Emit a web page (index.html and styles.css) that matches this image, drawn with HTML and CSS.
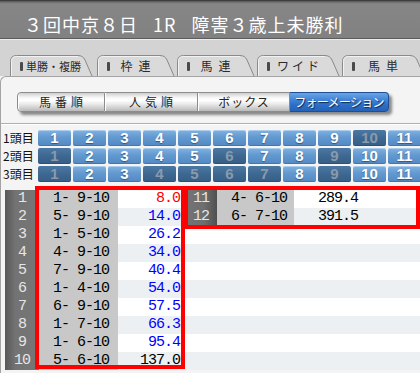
FILE: index.html
```html
<!DOCTYPE html>
<html lang="ja">
<head>
<meta charset="utf-8">
<title>オッズ</title>
<link rel="stylesheet" href="styles.css">
</head>
<body>
<header class="header"><h1 class="title">３回中京８日 1R 障害３歳上未勝利</h1></header>

<nav class="tabs">
  <div class="tab">
    <svg class="tab-shape" width="85" height="21" viewBox="0 0 85 21"><path class="tab-fill" d="M0.5 21 V6.5 Q0.5 0.5 6.5 0.5 H68 Q73 0.5 75 5 L82 21"/><path class="tab-hl" d="M1.5 21 V6.5 Q1.5 1.5 6.5 1.5 H68"/></svg>
    <span class="tab-label"><i class="tab-mark"></i><span class="tab-text tab-text-tight">単勝・複勝</span></span>
  </div>
  <div class="tab">
    <svg class="tab-shape" width="80" height="21" viewBox="0 0 80 21"><path class="tab-fill" d="M0.5 21 V6.5 Q0.5 0.5 6.5 0.5 H63 Q68 0.5 70 5 L77 21"/><path class="tab-hl" d="M1.5 21 V6.5 Q1.5 1.5 6.5 1.5 H63"/></svg>
    <span class="tab-label"><i class="tab-mark"></i><span class="tab-text tab-text-wide">枠連</span></span>
  </div>
  <div class="tab">
    <svg class="tab-shape" width="80" height="21" viewBox="0 0 80 21"><path class="tab-fill" d="M0.5 21 V6.5 Q0.5 0.5 6.5 0.5 H63 Q68 0.5 70 5 L77 21"/><path class="tab-hl" d="M1.5 21 V6.5 Q1.5 1.5 6.5 1.5 H63"/></svg>
    <span class="tab-label"><i class="tab-mark"></i><span class="tab-text tab-text-wide">馬連</span></span>
  </div>
  <div class="tab">
    <svg class="tab-shape" width="85" height="21" viewBox="0 0 85 21"><path class="tab-fill" d="M0.5 21 V6.5 Q0.5 0.5 6.5 0.5 H68 Q73 0.5 75 5 L82 21"/><path class="tab-hl" d="M1.5 21 V6.5 Q1.5 1.5 6.5 1.5 H68"/></svg>
    <span class="tab-label"><i class="tab-mark"></i><span class="tab-text tab-text-mid">ワイド</span></span>
  </div>
  <div class="tab">
    <svg class="tab-shape" width="85" height="21" viewBox="0 0 85 21"><path class="tab-fill" d="M0.5 21 V6.5 Q0.5 0.5 6.5 0.5 H68 Q73 0.5 75 5 L82 21"/><path class="tab-hl" d="M1.5 21 V6.5 Q1.5 1.5 6.5 1.5 H68"/></svg>
    <span class="tab-label"><i class="tab-mark"></i><span class="tab-text tab-text-wide">馬単</span></span>
  </div>
</nav>

<main class="panel">
  <div class="sorts">
    <button class="sort sort-a">馬番順</button>
    <button class="sort sort-b">人気順</button>
    <button class="sort sort-c">ボックス</button>
    <button class="sort sort-d sort-on">フォーメーション</button>
  </div>

  <hr class="divider">

  <div class="picker">
    <span class="pick-label">1頭目</span>
    <span class="cell on">1</span><span class="cell on">2</span><span class="cell on">3</span><span class="cell on">4</span><span class="cell on">5</span><span class="cell on">6</span><span class="cell on">7</span><span class="cell on">8</span><span class="cell on">9</span><span class="cell off">10</span><span class="cell on">11</span>
    <span class="pick-label">2頭目</span>
    <span class="cell off">1</span><span class="cell on">2</span><span class="cell on">3</span><span class="cell on">4</span><span class="cell on">5</span><span class="cell off">6</span><span class="cell on">7</span><span class="cell on">8</span><span class="cell off">9</span><span class="cell on">10</span><span class="cell on">11</span>
    <span class="pick-label">3頭目</span>
    <span class="cell off">1</span><span class="cell on">2</span><span class="cell on">3</span><span class="cell off">4</span><span class="cell off">5</span><span class="cell off">6</span><span class="cell off">7</span><span class="cell on">8</span><span class="cell off">9</span><span class="cell on">10</span><span class="cell on">11</span>
  </div>

  <section class="results">
    <div class="list list-left">
      <div class="row"><span class="num">1</span><span class="combo">1- 9-10</span><span class="odds odds-red">8.0</span></div>
      <div class="row"><span class="num">2</span><span class="combo">5- 9-10</span><span class="odds odds-blue">14.0</span></div>
      <div class="row"><span class="num">3</span><span class="combo">1- 5-10</span><span class="odds odds-blue">26.2</span></div>
      <div class="row"><span class="num">4</span><span class="combo">4- 9-10</span><span class="odds odds-blue">34.0</span></div>
      <div class="row"><span class="num">5</span><span class="combo">7- 9-10</span><span class="odds odds-blue">40.4</span></div>
      <div class="row"><span class="num">6</span><span class="combo">1- 4-10</span><span class="odds odds-blue">54.0</span></div>
      <div class="row"><span class="num">7</span><span class="combo">6- 9-10</span><span class="odds odds-blue">57.5</span></div>
      <div class="row"><span class="num">8</span><span class="combo">1- 7-10</span><span class="odds odds-blue">66.3</span></div>
      <div class="row"><span class="num">9</span><span class="combo">1- 6-10</span><span class="odds odds-blue">95.4</span></div>
      <div class="row"><span class="num">10</span><span class="combo">5- 6-10</span><span class="odds">137.0</span></div>
    </div>
    <div class="list list-right">
      <div class="row"><span class="num">11</span><span class="combo">4- 6-10</span><span class="odds">289.4</span></div>
      <div class="row"><span class="num">12</span><span class="combo">6- 7-10</span><span class="odds">391.5</span></div>
    </div>
    <div class="frame frame-left"></div>
    <div class="frame frame-right"></div>
  </section>
</main>
</body>
</html>
```

FILE: styles.css
```css
* { box-sizing: border-box; }

html, body {
  margin: 0;
  padding: 0;
}

body {
  width: 420px;
  height: 373px;
  overflow: hidden;
  background: #f4f4f4;
  font-family: "Noto Sans CJK JP", "Liberation Sans", sans-serif;
  color: #222;
}

/* ---------- header ---------- */
.header {
  height: 39px;
  background: linear-gradient(#2e2e2e 0, #6e6e6e 2px, #868686 4px, #818181 100%);
  border-bottom: 1px solid #5c5c5c;
}

.title {
  margin: 0;
  padding: 12px 0 0 24px;
  font-weight: normal;
  font-size: 18px;
  line-height: 24px;
  letter-spacing: 1px;
  word-spacing: 10px;
  color: #fff;
  white-space: nowrap;
}

/* ---------- tabs ---------- */
.tabs {
  display: flex;
  height: 37px;
  padding: 15px 0 0 10px;
  background: #d3d3d3;
  border-top: 1px solid #ebebeb;
  overflow: hidden;
}

.tab {
  display: grid;
  height: 21px;
  flex: none;
}

.tab > * { grid-area: 1 / 1; }

.tab-shape { display: block; }

.tab-fill {
  fill: #dadada;
  stroke: #8a8a8a;
  stroke-width: 1;
}

.tab-hl {
  fill: none;
  stroke: #f2f2f2;
  stroke-width: 1;
}

.tab-label {
  display: flex;
  align-items: center;
  padding: 1px 16px 0 10px;
}

.tab-mark {
  display: block;
  width: 3px;
  height: 9px;
  border-radius: 1px;
  background: #4a4a4a;
  flex: none;
}

.tab-text {
  flex: 1;
  text-align: center;
  font-size: 12px;
  line-height: 14px;
  color: #2a2a2a;
  white-space: nowrap;
}

.tab-text-tight {
  font-size: 11px;
  letter-spacing: 0;
  padding-left: 3px;
  text-align: left;
}

.tab-text-wide { letter-spacing: 6px; padding-left: 6px; }
.tab-text-mid { letter-spacing: 3px; padding-left: 3px; }

/* ---------- panel ---------- */
.panel {
  background: #f4f4f4;
  border-top: 1px solid #a3a3a3;
  border-left: 1px solid #a3a3a3;
  border-top-left-radius: 6px;
  height: 297px;
}

.sorts {
  display: flex;
  width: fit-content;
  margin: 15px 0 0 16px;
  border-radius: 4px;
  box-shadow: 3px 3px 3px rgba(0, 0, 0, 0.45);
}

.sort {
  height: 20px;
  padding: 0;
  margin: 0;
  border: 1px solid #8c8c8c;
  border-left: none;
  background: linear-gradient(#cfcfcf 0%, #f6f6f6 25%, #ffffff 40%, #e6e6e6 65%, #b9b9b9 100%);
  font-family: "Noto Sans CJK JP", sans-serif;
  font-size: 12px;
  line-height: 18px;
  color: #222;
  box-shadow: inset 1px 0 0 #fff;
}

.sort-a {
  width: 88px;
  border-left: 1px solid #8c8c8c;
  border-radius: 4px 0 0 4px;
  letter-spacing: 4px;
  padding-left: 4px;
}

.sort-b { width: 93px; letter-spacing: 4px; padding-left: 4px; }
.sort-c { width: 92px; letter-spacing: 1px; padding-left: 1px; }

.sort-d {
  width: 99px;
  letter-spacing: -0.7px;
  border-radius: 0 4px 4px 0;
}

.sort-on {
  background: linear-gradient(#6aa4e6 0%, #3f82d6 40%, #2c6cc4 70%, #2563b8 100%);
  border-color: #1f4f92;
  color: #fff;
  text-shadow: 1px 1px 1px #0c2448;
  box-shadow: none;
}

.divider {
  margin: 11px 0 0 0;
  height: 2px;
  border: none;
  border-top: 1px solid #b0b0b0;
  border-bottom: 1px solid #ffffff;
}

/* ---------- horse picker ---------- */
.picker {
  display: grid;
  grid-template-columns: 35px repeat(11, 33px);
  grid-auto-rows: 16px;
  column-gap: 2px;
  row-gap: 2px;
  margin-top: 5px;
}

.pick-label {
  padding-left: 2px;
  font-size: 12px;
  line-height: 16px;
  letter-spacing: 0;
  color: #111;
  white-space: nowrap;
}

.cell {
  border-radius: 2px;
  text-align: center;
  font-family: "Liberation Sans", Arial, sans-serif;
  font-weight: bold;
  font-size: 15px;
  line-height: 16px;
}

.cell.on {
  background: linear-gradient(#80b3e3 0%, #6399d0 45%, #5289c3 100%);
  color: #fff;
  text-shadow: 0 1px 1px rgba(20, 50, 90, 0.6);
  box-shadow: inset 0 1px 0 rgba(255, 255, 255, 0.35), inset 0 -1px 0 rgba(0, 0, 0, 0.15);
}

.cell.off {
  background: linear-gradient(#4b78a4 0%, #3e6891 50%, #365e86 100%);
  color: #8a9aab;
  box-shadow: inset 0 -1px 0 rgba(0, 0, 0, 0.15);
}

/* ---------- results ---------- */
.results {
  position: relative;
  display: flex;
  margin-top: 4px;
  padding-top: 4px;
  font-family: "Liberation Mono", "DejaVu Sans Mono", monospace;
  font-size: 15px;
  letter-spacing: -1px;
}

.list-left {
  margin-left: 4px;
  width: 180px;
  flex: none;
}

.list-right {
  flex: 1;
  padding-left: 3px;
  height: 180px;
  background: repeating-linear-gradient(#ffffff 0 18px, #ecf0f3 18px 36px);
}

.row {
  display: flex;
  height: 18px;
  line-height: 18px;
  white-space: pre;
}

.num {
  color: #e6e6e6;
  text-align: center;
}

.list-left .num {
  width: 34px;
  background: linear-gradient(to right, #575757 0, #737373 30%, #767676 100%);
}

.list-right .num {
  width: 29px;
  padding-left: 5px;
  text-align: left;
  background: linear-gradient(to right, #737373 0, #6e6e6e 55%, #4f4f4f 100%);
}

.combo {
  background: #c8c8c8;
  color: #000;
  text-align: right;
}

.list-left .combo { width: 79px; padding-right: 9px; }
.list-right .combo { width: 77px; padding-right: 7px; }

.odds {
  width: 67px;
  padding-right: 5px;
  text-align: right;
  color: #000;
  background: #ffffff;
}

.list-right .odds { padding-right: 3px; }

.row:nth-child(even) .odds { background: #ecf0f3; }

.odds-red { color: #ff0000; }
.odds-blue { color: #0000ff; }

.frame {
  position: absolute;
  top: 0;
  border: 4px solid #ff0000;
  pointer-events: none;
}

.frame-left {
  left: 34px;
  width: 150px;
  height: 183px;
}

.frame-right {
  left: 183px;
  width: 236px;
  height: 43px;
}
```
